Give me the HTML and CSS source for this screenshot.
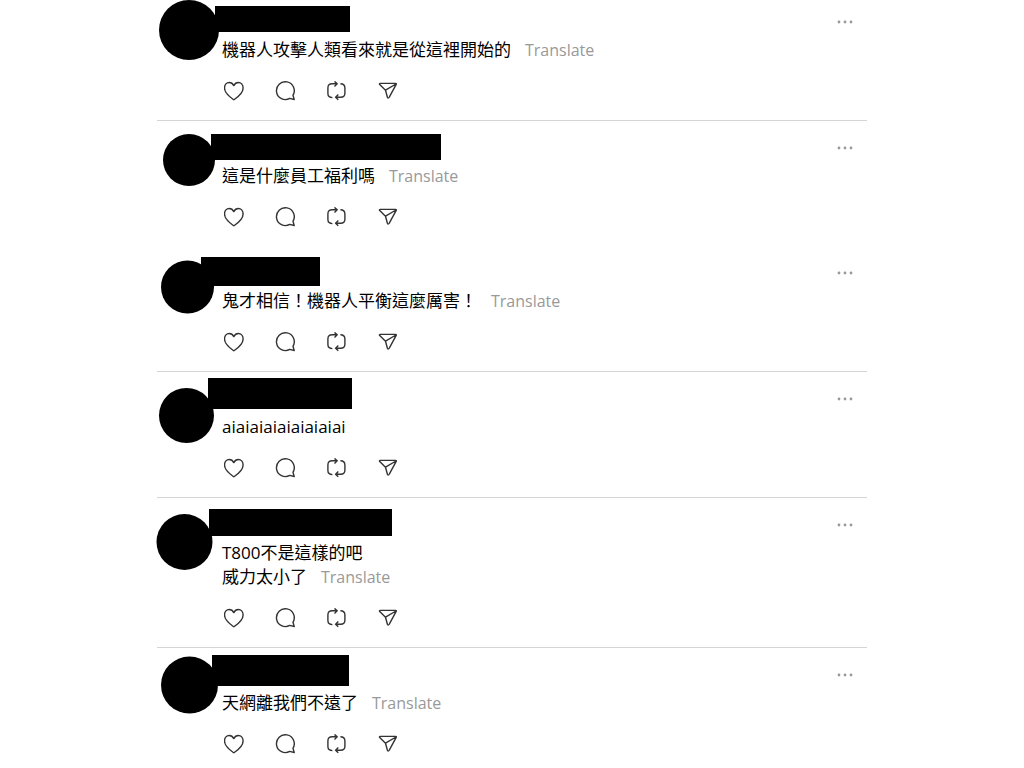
FILE: index.html
```
<!DOCTYPE html>
<html lang="zh-Hant">
<head>
  <meta charset="UTF-8" />
  <meta name="viewport" content="width=device-width, initial-scale=1.0"/>
  <title>Replies</title>
  <link rel="stylesheet" href="styles.css">
</head>
<body>

  <!-- shared icons -->
  <svg class="sprite" aria-hidden="true">
    <symbol id="heart" viewBox="0 0 20 20">
      <path d="M9.8 18.8C8 17.5 .5 12.7 .5 6.9.5 3.7 2.7 1.5 5.2 1.5 7.2 1.5 8.8 2.6 9.8 4.6 10.8 2.6 12.4 1.5 14.4 1.5 16.9 1.5 19.1 3.7 19.1 6.9 19.1 12.7 11.6 17.5 9.8 18.8Z"/>
    </symbol>
    <symbol id="comment" viewBox="0 0 20 20">
      <path d="M18 14.2A8.9 8.9 0 1 0 14.7 17.4L19.2 18.5Z"/>
    </symbol>
    <symbol id="repost" viewBox="0 0 20 20">
      <path d="M6.4 16.6Q1.9 16.6 1.9 12.6V7Q1.9 2.8 6.2 2.8H11M8.5.4L11.2 2.8 8.5 5.4M14.4 2.8Q18.9 2.8 18.9 7V12.2Q18.9 16.2 14.6 16.2H9.8M12.3 13.6L9.6 16.2 12.3 18.8"/>
    </symbol>
    <symbol id="share" viewBox="0 0 20 20">
      <path d="M3.3 2.4H18.6Q19.7 2.4 19.2 3.4L12.3 16.2Q11.1 17.8 10.4 16.2L8.5 9.2 2.7 3.6Q2 2.5 3.3 2.4ZM8.5 9.2L19 3"/>
    </symbol>
    <symbol id="more" viewBox="0 0 20 20">
      <circle cx="4" cy="10" r="1.4"/>
      <circle cx="10" cy="10" r="1.4"/>
      <circle cx="16" cy="10" r="1.4"/>
    </symbol>
  </svg>

  <main class="feed">

    <article class="post">
      <svg class="redaction" aria-hidden="true"><circle cx="32" cy="35" r="30"/><rect x="58" y="11" width="135" height="26"/></svg>
      <div class="post-head"><button class="more" aria-label="More"><svg><use href="#more"/></svg></button></div>
      <p class="text">機器人攻擊人類看來就是從這裡開始的<a class="translate" href="#">Translate</a></p>
      <div class="actions">
        <button aria-label="Like"><svg><use href="#heart"/></svg></button>
        <button aria-label="Reply"><svg><use href="#comment"/></svg></button>
        <button aria-label="Repost"><svg><use href="#repost"/></svg></button>
        <button aria-label="Share"><svg><use href="#share"/></svg></button>
      </div>
    </article>

    <article class="post joined">
      <svg class="redaction" aria-hidden="true"><circle cx="32" cy="39" r="26"/><rect x="54" y="13" width="230" height="26"/></svg>
      <div class="post-head"><button class="more" aria-label="More"><svg><use href="#more"/></svg></button></div>
      <p class="text">這是什麼員工福利嗎<a class="translate" href="#">Translate</a></p>
      <div class="actions">
        <button aria-label="Like"><svg><use href="#heart"/></svg></button>
        <button aria-label="Reply"><svg><use href="#comment"/></svg></button>
        <button aria-label="Repost"><svg><use href="#repost"/></svg></button>
        <button aria-label="Share"><svg><use href="#share"/></svg></button>
      </div>
    </article>

    <article class="post">
      <svg class="redaction" aria-hidden="true"><circle cx="30.5" cy="41" r="26.5"/><rect x="44" y="11" width="119" height="29"/></svg>
      <div class="post-head"><button class="more" aria-label="More"><svg><use href="#more"/></svg></button></div>
      <p class="text">鬼才相信！機器人平衡這麼厲害！<a class="translate" href="#">Translate</a></p>
      <div class="actions">
        <button aria-label="Like"><svg><use href="#heart"/></svg></button>
        <button aria-label="Reply"><svg><use href="#comment"/></svg></button>
        <button aria-label="Repost"><svg><use href="#repost"/></svg></button>
        <button aria-label="Share"><svg><use href="#share"/></svg></button>
      </div>
    </article>

    <article class="post">
      <svg class="redaction" aria-hidden="true"><circle cx="29.5" cy="43.5" r="27.5"/><rect x="51" y="6" width="144" height="31"/></svg>
      <div class="post-head"><button class="more" aria-label="More"><svg><use href="#more"/></svg></button></div>
      <p class="text">aiaiaiaiaiaiaiaiai</p>
      <div class="actions">
        <button aria-label="Like"><svg><use href="#heart"/></svg></button>
        <button aria-label="Reply"><svg><use href="#comment"/></svg></button>
        <button aria-label="Repost"><svg><use href="#repost"/></svg></button>
        <button aria-label="Share"><svg><use href="#share"/></svg></button>
      </div>
    </article>

    <article class="post">
      <svg class="redaction" aria-hidden="true"><circle cx="27.5" cy="44" r="28"/><rect x="52" y="11" width="183" height="27"/></svg>
      <div class="post-head"><button class="more" aria-label="More"><svg><use href="#more"/></svg></button></div>
      <p class="text">T800不是這樣的吧<br>威力太小了<a class="translate" href="#">Translate</a></p>
      <div class="actions">
        <button aria-label="Like"><svg><use href="#heart"/></svg></button>
        <button aria-label="Reply"><svg><use href="#comment"/></svg></button>
        <button aria-label="Repost"><svg><use href="#repost"/></svg></button>
        <button aria-label="Share"><svg><use href="#share"/></svg></button>
      </div>
    </article>

    <article class="post">
      <svg class="redaction" aria-hidden="true"><circle cx="32.5" cy="37" r="28.5"/><rect x="55" y="7" width="137" height="31"/></svg>
      <div class="post-head"><button class="more" aria-label="More"><svg><use href="#more"/></svg></button></div>
      <p class="text">天網離我們不遠了<a class="translate" href="#">Translate</a></p>
      <div class="actions">
        <button aria-label="Like"><svg><use href="#heart"/></svg></button>
        <button aria-label="Reply"><svg><use href="#comment"/></svg></button>
        <button aria-label="Repost"><svg><use href="#repost"/></svg></button>
        <button aria-label="Share"><svg><use href="#share"/></svg></button>
      </div>
    </article>

  </main>

</body>
</html>
```

FILE: styles.css
```
* {
  box-sizing: border-box;
  margin: 0;
  padding: 0;
}
body {
  background: #fff;
  color: #000;
  font-family: "Open Sans", "Noto Sans CJK TC", sans-serif;
}
.sprite {
  display: none;
}
.feed {
  max-width: 710px;
  margin: -5px auto 0;
}
.post {
  position: relative;
  padding: 17px 12px 19px 65px;
  border-bottom: 1px solid #d5d5d5;
}
.post.joined,
.post:last-child {
  border-bottom: none;
}
.post:last-child {
  padding-bottom: 12px;
}
/* black marks over the avatar and user name */
.redaction {
  position: absolute;
  top: 0;
  left: 0;
  width: 100%;
  height: 75px;
  overflow: visible;
  pointer-events: none;
}
.post-head {
  display: flex;
  justify-content: flex-end;
  margin-bottom: 6px;
}
button {
  width: 20px;
  height: 20px;
  background: none;
  border: none;
  cursor: pointer;
}
button svg {
  display: block;
  width: 20px;
  height: 20px;
  fill: none;
  stroke: #333;
  stroke-width: 1.4;
  stroke-linejoin: round;
}
.more svg {
  fill: #999;
  stroke: none;
}
.text {
  font-size: 17px;
  line-height: 24px;
}
.translate {
  margin-left: 14px;
  font-size: 16px;
  color: #999;
  text-decoration: none;
}
.actions {
  display: flex;
  gap: 31px;
  margin-top: 19px;
  padding-left: 2px;
}
```
